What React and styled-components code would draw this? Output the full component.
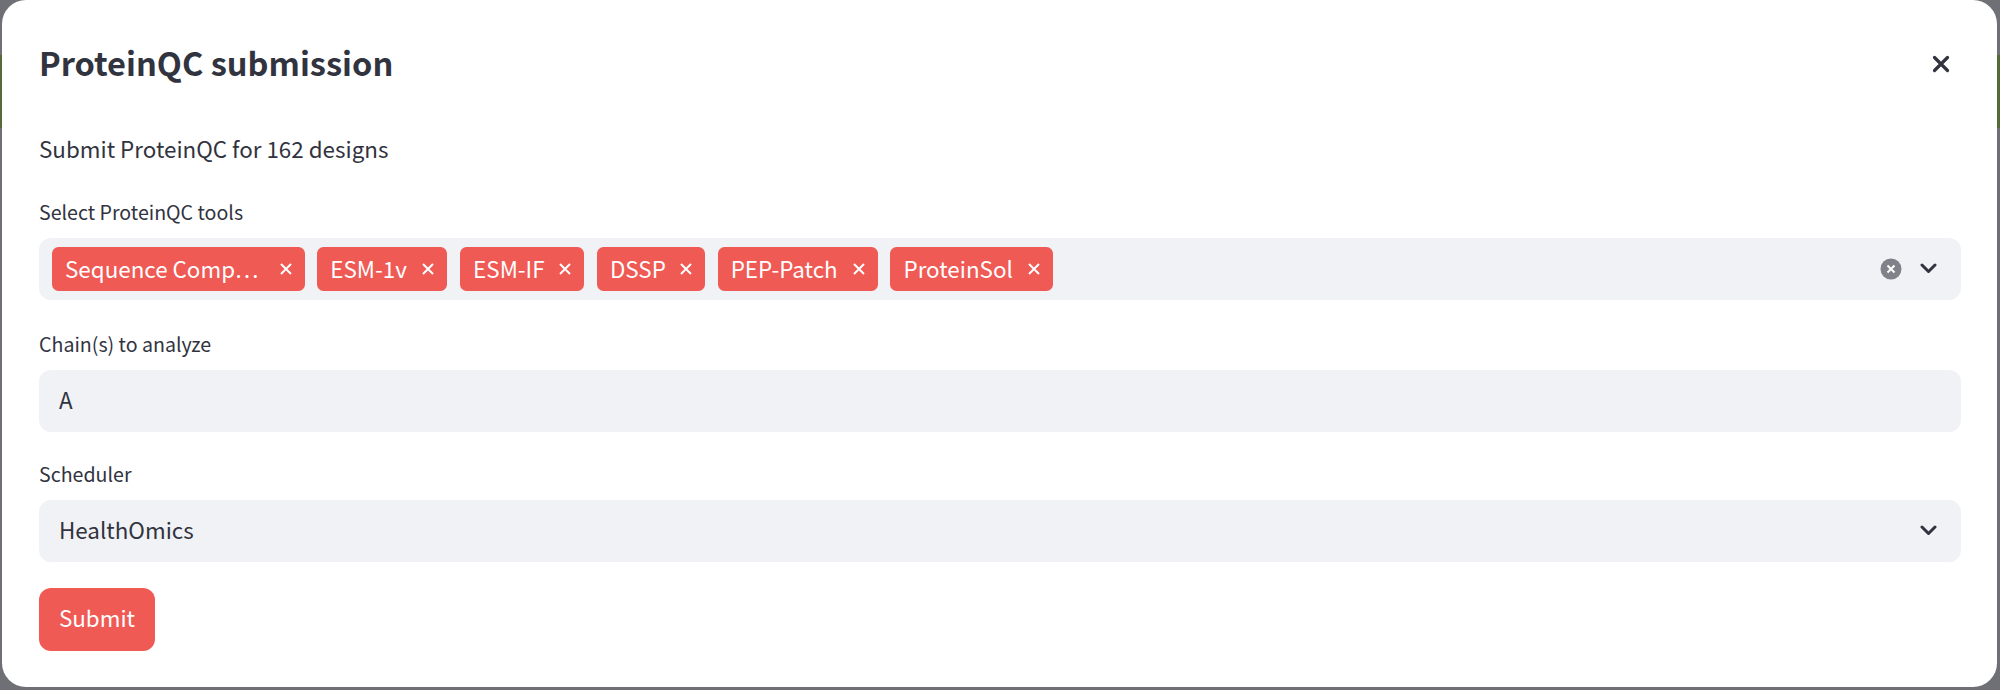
import React from "react";
import styled, { createGlobalStyle } from "styled-components";

const Global = createGlobalStyle`
  html, body { margin: 0; padding: 0; background: #6f7076; }
  body { font-family: "Noto Sans CJK SC", "Source Sans Pro", "Noto Sans", sans-serif; color: #31333f; }
  * { box-sizing: border-box; }
`;

const Backdrop = styled.div`
  width: 2000px;
  height: 690px;
  padding: 0 3px 3px 2px;
  background: linear-gradient(
    to bottom,
    #6f7076 0,
    #6f7076 55px,
    #55693a 55px,
    #55693a 128px,
    #6f7076 128px,
    #6f7076 100%
  );
  overflow: hidden;
`;

const Dialog = styled.section`
  height: 687px;
  background: #fff;
  border-radius: 24px;
  padding: 0 37px;
  display: flex;
  flex-direction: column;
`;

const Header = styled.header`
  height: 126px;
  display: flex;
  align-items: flex-start;
  justify-content: space-between;
  padding-top: 37px;
`;

const Title = styled.h2`
  margin: 0;
  font-size: 32.6px;
  line-height: 50px;
  font-weight: 600;
  color: #31333f;
`;

const CloseButton = styled.button`
  border: 0;
  background: none;
  padding: 0;
  margin: 15px 7px 0 0;
  width: 24px;
  height: 24px;
  color: #31333f;
  display: flex;
`;

const Intro = styled.p`
  margin: 0;
  font-size: 22.4px;
  line-height: 44px;
  height: 44px;
`;

const Label = styled.label`
  display: block;
  font-size: 19.6px;
  line-height: 32px;
  height: 32px;
  margin-top: ${(p) => p.$top}px;
  margin-bottom: 10px;
`;

const Field = styled.div`
  height: 62px;
  width: 1922px;
  background: #f0f2f6;
  border-radius: 12px;
  display: flex;
  align-items: center;
  font-size: 22.4px;
  padding: 0 24px 0 ${(p) => (p.$tags ? "13px" : "20px")};
`;

const Tags = styled.div`
  display: flex;
  gap: 12.8px;
  flex: 1;
`;

const Tag = styled.span`
  display: flex;
  align-items: center;
  justify-content: space-between;
  height: 44px;
  width: ${(p) => p.$w}px;
  padding: 0 12px 0 13px;
  background: #ef5a54;
  color: #fff;
  border-radius: 6.5px;
  font-size: 22.4px;
  white-space: nowrap;
`;

const TagText = styled.span`
  margin-top: -3px;
`;

const FieldValue = styled.span`
  flex: 1;
  margin-top: -4px;
`;

const ClearIcon = styled.svg`
  width: 22px;
  height: 22px;
  margin-right: 18px;
  display: block;
`;

const Chevron = styled.svg`
  width: 17px;
  height: 11px;
  display: block;
  margin-top: -1px;
`;

const Submit = styled.button`
  margin-top: 26px;
  width: 116px;
  height: 63px;
  border: 0;
  border-radius: 12px;
  background: #ef5a54;
  color: #fff;
  font-family: inherit;
  font-size: 22.4px;
  padding: 0 0 6px;
`;

const Cross = ({ size = 14, sw = 2 }) => (
  <svg width={size} height={size} viewBox="0 0 14 14" fill="none" stroke="currentColor" strokeWidth={sw} strokeLinecap="butt">
    <path d="M2 2 L12 12 M12 2 L2 12" />
  </svg>
);

const ChevronIcon = () => (
  <Chevron viewBox="0 0 17 11" fill="none" stroke="#31333f" strokeWidth="3" strokeLinecap="round" strokeLinejoin="round">
    <path d="M2 2 L8.5 8.5 L15 2" />
  </Chevron>
);

const tags = [
  ["Sequence Comp…", 252.5],
  ["ESM-1v", 130],
  ["ESM-IF", 124],
  ["DSSP", 108],
  ["PEP-Patch", 160],
  ["ProteinSol", 163],
];

export default function App() {
  return (
    <>
      <Global />
      <Backdrop>
        <Dialog>
          <Header>
            <Title>ProteinQC submission</Title>
            <CloseButton aria-label="Close">
              <svg width="24" height="24" viewBox="0 0 24 24" fill="none" stroke="currentColor" strokeWidth="3.2" strokeLinecap="round">
                <path d="M5.5 5.5 L18.5 18.5 M18.5 5.5 L5.5 18.5" />
              </svg>
            </CloseButton>
          </Header>
          <Intro>Submit ProteinQC for 162 designs</Intro>
          <Label $top={26}>Select ProteinQC tools</Label>
          <Field $tags>
            <Tags>
              {tags.map(([t, w]) => (
                <Tag key={t} $w={w}>
                  <TagText>{t}</TagText>
                  <Cross />
                </Tag>
              ))}
            </Tags>
            <ClearIcon viewBox="0 0 22 22">
              <circle cx="11" cy="11" r="10.5" fill="#808289" />
              <path d="M7.5 7.5 L14.5 14.5 M14.5 7.5 L7.5 14.5" stroke="#fff" strokeWidth="2" />
            </ClearIcon>
            <ChevronIcon />
          </Field>
          <Label $top={28}>Chain(s) to analyze</Label>
          <Field>
            <FieldValue>A</FieldValue>
          </Field>
          <Label $top={26}>Scheduler</Label>
          <Field>
            <FieldValue>HealthOmics</FieldValue>
            <ChevronIcon />
          </Field>
          <Submit>Submit</Submit>
        </Dialog>
      </Backdrop>
    </>
  );
}
